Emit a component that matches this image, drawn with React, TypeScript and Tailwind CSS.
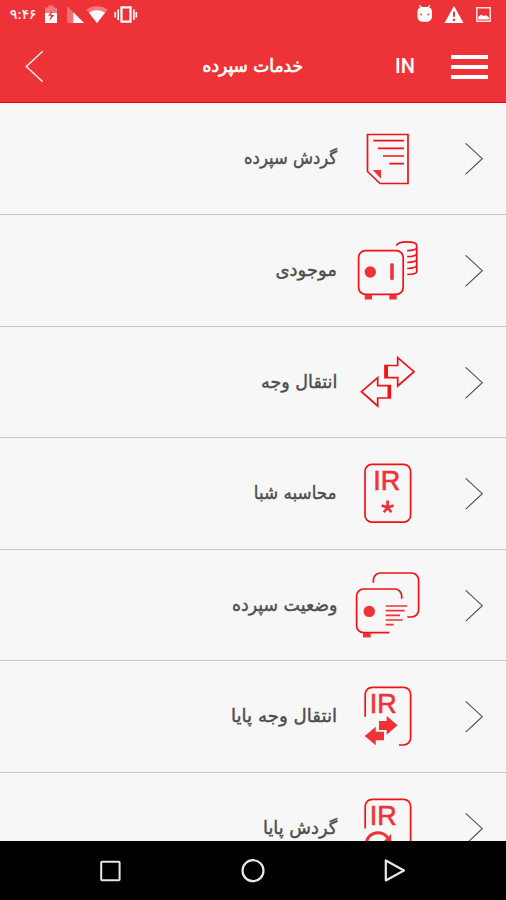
import type { ReactNode } from 'react';

interface Service {
  label: string;
  icon: ReactNode;
  height: string;
  stretch: string;
}

const RED = '#f01218';
const FILL = '#ee3338';

function IbanText({ x, y }: { x: number; y: number }) {
  return (
    <text
      x={x}
      y={y}
      fontFamily="Liberation Sans, sans-serif"
      fontSize="27"
      fill={FILL}
      stroke={FILL}
      strokeWidth="0.6"
    >
      IR
    </text>
  );
}

function StatementIcon() {
  return (
    <>
      <path d="M15.5 11.5h40.500v49H28L15.5 48.5z" />
      <path d="M21.3 17.7H52M26 25.3h26M31 33h21M37.3 40.6H52" />
      <path d="M20.7 47H29v8.7z" fill={FILL} stroke="none" />
    </>
  );
}

function BalanceIcon() {
  return (
    <>
      <rect x="6.6" y="15.6" width="44.6" height="43.8" rx="7" />
      <circle cx="18.3" cy="37" r="5.7" fill={FILL} stroke="none" />
      <rect x="38.2" y="28.3" width="3.6" height="16.8" rx="1.4" fill={FILL} stroke="none" />
      <path d="M12.7 60H20v4.4h-7.3zM37.3 60h7.4v4.4h-7.4z" fill={FILL} stroke="none" />
      <path d="M44.3 10.6C45.5 8 50 6.8 54.7 6.8s10 1 10 3.6v26.4c0 1.7-4 2.6-9.5 2.7" />
      <path d="M55.2 15.7c5.5-.2 9.5-1.2 9.5-3.2M55.2 21.7c5.5-.2 9.5-1.2 9.5-3.2M55.2 27.5c5.5-.2 9.5-1.2 9.5-3.2M55.2 33.5c5.5-.2 9.5-1.2 9.5-3.2" />
    </>
  );
}

function TransferIcon() {
  return (
    <>
      <path d="M33 18.5h12.7v-7.8L62 24.7 45.7 39v-8.3H33z" />
      <path d="M34.5 18.5v12.2M37 38.7V51" strokeWidth="3" />
      <path d="M9.5 44.7l16.2-14v8h12.6V51H25.7v8z" />
    </>
  );
}

function IbanIcon() {
  return (
    <>
      <rect x="13" y="6.4" width="45.6" height="57.8" rx="7" />
      <IbanText x={21.2} y={32.4} />
      <path
        d="M35.6 49.5v-7M35.6 49.5l-6-2M35.6 49.5l6-2M35.6 49.5l-3.7 4.8M35.6 49.5l3.7 4.8"
        stroke={FILL}
        strokeWidth="2.7"
      />
    </>
  );
}

function StatusIcon() {
  return (
    <>
      <path d="M21.4 12.7V10a7 7 0 0 1 7-7h31.2a7 7 0 0 1 7 7v30a7 7 0 0 1-7 7h-4.3" />
      <path d="M49.7 28.7V26a7 7 0 0 0-7-7H11.6a7 7 0 0 0-7 7v29.7a7 7 0 0 0 7 7h25.7" />
      <circle cx="17.3" cy="41.4" r="5.7" fill={FILL} stroke="none" />
      <path d="M11 63h7.7v4.4H11z" fill={FILL} stroke="none" />
      <path d="M33.7 36H55M33.7 40.7h19M33.7 45.4H48M33.7 50h17M33.7 54.7h8" stroke={FILL} />
    </>
  );
}

function PayaTransferIcon() {
  return (
    <>
      <path d="M13.2 35.7V13.3a7 7 0 0 1 7-7h31.4a7 7 0 0 1 7 7V57a7 7 0 0 1-7 7H47" />
      <IbanText x={17.7} y={32.4} />
      <path d="M27 40h7.7v-5l10.8 9.3-10.8 9.4V49H27z" fill={FILL} stroke="none" />
      <path d="M12.7 55l11-9.3v5H32v8.6h-8.3v5z" fill={FILL} stroke="none" />
    </>
  );
}

function PayaHistoryIcon() {
  return (
    <>
      <path d="M13.2 35.5V13.3a7 7 0 0 1 7-7h31.4a7 7 0 0 1 7 7V57a7 7 0 0 1-7 7H47" />
      <IbanText x={17.7} y={32} />
      <path d="M14.3 52c0-8 5.5-12.2 11.5-12.2 4.2 0 7.5 1.6 10 5" stroke={FILL} strokeWidth="3" />
      <path d="M39.2 41v9.5h-10z" fill={FILL} stroke="none" />
    </>
  );
}

const services: Service[] = [
  { label: 'گردش سپرده', icon: <StatementIcon />, height: 'h-[112px]', stretch: 'scale-x-[0.912]' },
  { label: 'موجودی', icon: <BalanceIcon />, height: 'h-[112px]', stretch: 'scale-x-100' },
  { label: 'انتقال وجه', icon: <TransferIcon />, height: 'h-[111px]', stretch: 'scale-x-[0.974]' },
  { label: 'محاسبه شبا', icon: <IbanIcon />, height: 'h-[112px]', stretch: 'scale-x-[0.934]' },
  { label: 'وضعیت سپرده', icon: <StatusIcon />, height: 'h-[111px]', stretch: 'scale-x-[0.964]' },
  { label: 'انتقال وجه پایا', icon: <PayaTransferIcon />, height: 'h-[112px]', stretch: 'scale-x-[1.01]' },
  { label: 'گردش پایا', icon: <PayaHistoryIcon />, height: 'h-[112px]', stretch: 'scale-x-[0.987]' },
];

function StatusBar() {
  return (
    <div className="flex h-[30px] items-center justify-between pl-[10px] pr-[14px]">
      <div className="flex items-center">
        <span className="mb-[3px] w-[27px] whitespace-nowrap text-[13.5px] leading-[24px] [-webkit-text-stroke:0.2px_#fff]">
          ۹:۴۶
        </span>
        {/* Battery, signal, wifi, vibrate */}
        <svg width="104" height="24" viewBox="37 3 104 24" fill="#fff">
          <path d="M48.3 5.5h5.2v2H57v6H45v-6h3.3z" opacity=".35" />
          <path d="M45 13h12v10H45z" />
          <path d="M52.5 10.5l-4.5 5.3h3l-1.7 5.2 5-6h-3.2z" fill="#ed3338" />
          <path d="M67 6l17 17H67z" opacity=".3" />
          <path d="M73.3 12.3L84 23H73.3z" />
          <path d="M86.3 9.5C92.5 5 101.5 5 107.7 9.5L97 23z" opacity=".35" />
          <path d="M89 12.8c4.7-3.5 11.3-3.5 16 0L97 23z" />
          <path d="M121.5 7.3h9v14.4h-9z" fill="none" stroke="#fff" strokeWidth="2.2" />
          <path d="M118.2 9.5V20M133.8 9.5V20M115.2 12v5.5M136.3 12v5.5" stroke="#fff" strokeWidth="1.7" />
        </svg>
      </div>
      {/* Debug head, warning, screenshot */}
      <svg width="76" height="20" viewBox="416 5 76 20" fill="#fff">
        <path d="M417.5 11c0-1.5 1.5-3.3 3-3.7l-1.5-2 .8-.6 1.9 2.3h6l1.9-2.3.8.6-1.5 2c1.6.5 3 2.2 3 3.7v5.5c0 3.5-2.5 5.3-5.5 5.3h-3.4c-3 0-5.5-1.8-5.5-5.3z" />
        <circle cx="421" cy="14.5" r=".9" fill="#ed3338" />
        <circle cx="428.3" cy="14.5" r=".9" fill="#ed3338" />
        <path d="M454 6l9.5 17h-19z" />
        <path d="M454 11.8v5M454 18.7v2.2" stroke="#ed3338" strokeWidth="2" />
        <path d="M476.8 7.8h13.4v13.4h-13.4z" fill="none" stroke="#fff" strokeWidth="1.5" opacity=".85" />
        <path d="M478.3 19.5v-2.7l3-2.3 2.2 1.8 2-1.3 3.3 2.2v2.3z" />
      </svg>
    </div>
  );
}

function Header() {
  return (
    <header className="h-[103px] shrink-0 border-b border-[#e4000b] bg-[#ee3338] text-white">
      <StatusBar />
      <div className="flex h-[72px] items-center pl-6 pr-[18px]">
        <svg width="22" height="34" viewBox="24 49 22 34" fill="none" stroke="#fff" strokeWidth="1.3">
          <path d="M42.7 51.2L26.3 66.5l16.4 15.2" />
        </svg>
        <h1
          dir="rtl"
          className="ml-auto w-[140px] origin-right scale-x-[0.945] whitespace-nowrap text-[18px] leading-7 [-webkit-text-stroke:0.7px_#fff]"
        >
          خدمات سپرده
        </h1>
        <span className="ml-[92px] w-[34px] font-[Roboto,sans-serif] text-[20px] font-medium">IN</span>
        <div className="ml-[22px] mt-px flex w-[37px] flex-col gap-[6px]">
          <span className="h-1 bg-white" />
          <span className="h-1 bg-white" />
          <span className="h-1 bg-white" />
        </div>
      </div>
    </header>
  );
}

function ServiceRow({ label, icon, height, stretch }: Service) {
  return (
    <li className={`flex shrink-0 items-start justify-end border-b border-[#c8c8c8] ${height}`}>
      <span
        dir="rtl"
        className={`mt-[41px] origin-right whitespace-nowrap text-[18px] leading-7 text-[#4d4d4d] [-webkit-text-stroke:0.4px_#4d4d4d] ${stretch}`}
      >
        {label}
      </span>
      <svg className="ml-[15px] mt-5" width="72" height="72" viewBox="0 0 72 72" fill="none" stroke={RED} strokeWidth="1.7">
        {icon}
      </svg>
      <svg className="ml-10 mr-[22px] mt-[38px]" width="20" height="36" viewBox="0 0 20 36" fill="none" stroke="#4d4d4d" strokeWidth="1.1">
        <path d="M1.7 2.3l16.6 15.4L1.7 33.2" />
      </svg>
    </li>
  );
}

function NavBar() {
  return (
    <nav className="h-[59px] shrink-0 bg-black">
      <div className="flex h-[59px] items-center justify-between px-[98px]">
        <svg width="24" height="24" viewBox="0 0 24 24" fill="none" stroke="#e8e8e8" strokeWidth="2">
          <rect x="3.2" y="2.8" width="18.4" height="18.4" rx=".8" />
        </svg>
        <svg width="26" height="26" viewBox="0 0 26 26" fill="none" stroke="#e8e8e8" strokeWidth="2.2">
          <circle cx="13" cy="12.7" r="10.5" />
        </svg>
        <svg width="24" height="26" viewBox="0 0 24 26" fill="none" stroke="#e8e8e8" strokeWidth="2.2" strokeLinejoin="round">
          <path d="M1.8 2.5v20L20 12.5z" />
        </svg>
      </div>
    </nav>
  );
}

export default function App() {
  return (
    <div className="flex h-[900px] w-[506px] flex-col overflow-hidden bg-[#f7f7f7] font-['DejaVu_Sans',sans-serif]">
      <Header />
      <ul className="flex min-h-0 flex-1 flex-col overflow-hidden">
        {services.map((service) => (
          <ServiceRow key={service.label} {...service} />
        ))}
      </ul>
      <NavBar />
    </div>
  );
}
